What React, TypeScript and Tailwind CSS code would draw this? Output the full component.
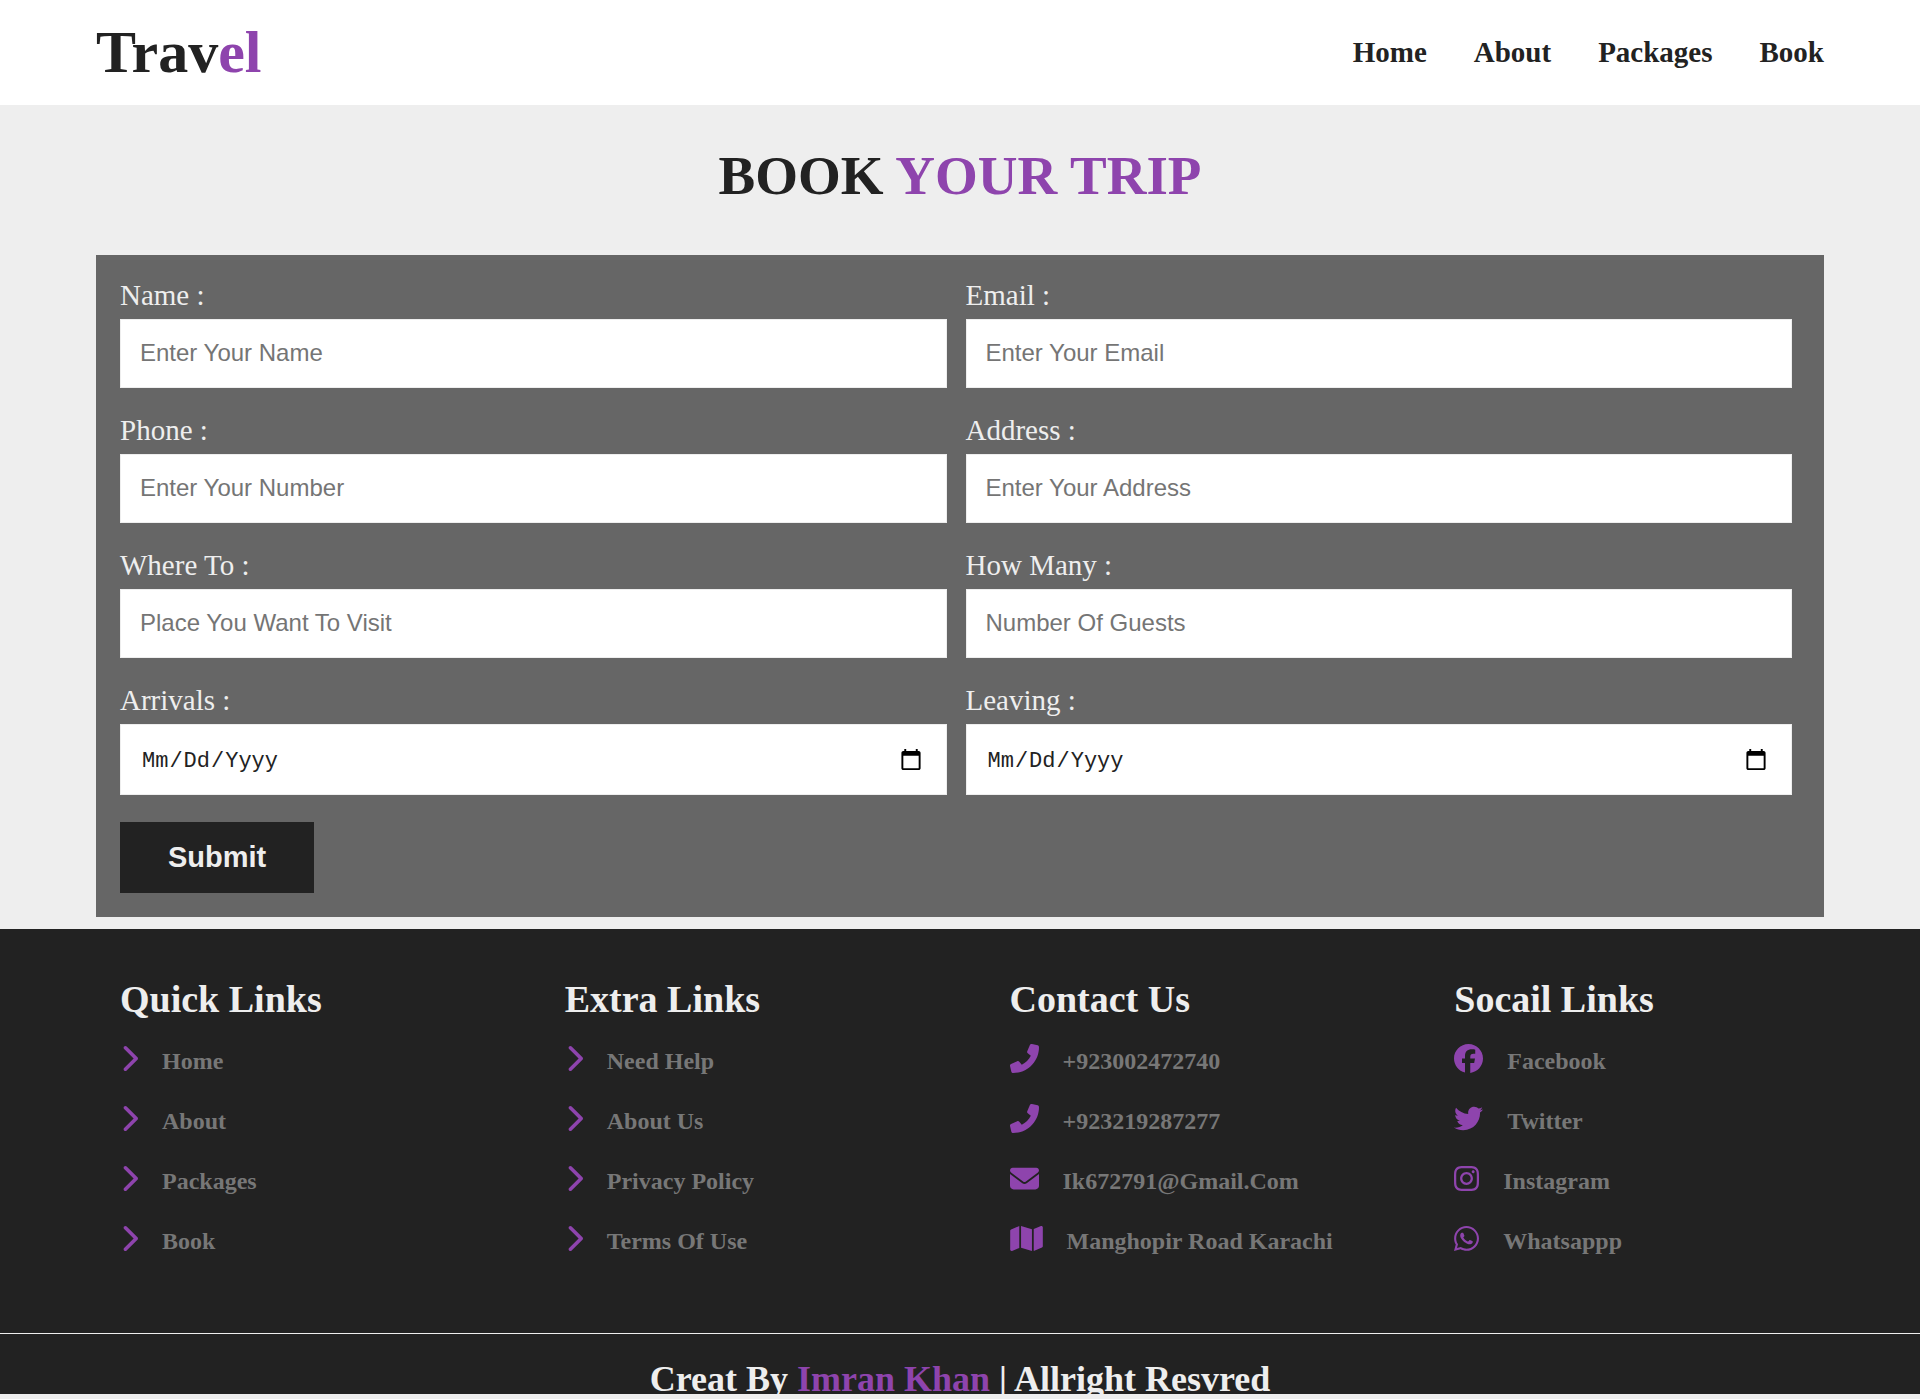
import type { ComponentType, SVGProps } from "react";
import {
  FaChevronRight,
  FaEnvelope,
  FaFacebook,
  FaInstagram,
  FaMap,
  FaTwitter,
  FaWhatsapp,
} from "react-icons/fa6";

type Field = { id: string; label: string; type: string; placeholder?: string };
type FooterLink = {
  text: string;
  icon: ComponentType<SVGProps<SVGSVGElement>>;
  width: string;
};

function PhoneIcon(props: SVGProps<SVGSVGElement>) {
  return (
    <svg viewBox="0 0 512 512" fill="currentColor" {...props}>
      <path d="M18.9 351.2l108.5-46.5c12.8-5.5 27.8-1.8 36.5 9l44.1 53.8c69.3-34 125.5-90.3 159.5-159.5l-53.8-44.1c-10.8-8.8-14.5-23.7-9-36.4l46.5-108.6c6.1-14.3 21.5-22 36.6-18.4l100.8 23.3C502.6 27.2 512 40.7 512 56c0 251.4-204.5 456-456 456-15.3 0-28.8-9.4-32.3-23.5L.4 387.7c-3.4-15 4.3-30.5 18.5-36.5z" />
    </svg>
  );
}

const navLinks = ["Home", "About", "Packages", "Book"];

const fields: Field[] = [
  { id: "name", label: "Name :", type: "text", placeholder: "Enter Your Name" },
  { id: "email", label: "Email :", type: "email", placeholder: "Enter Your Email" },
  { id: "phone", label: "Phone :", type: "tel", placeholder: "Enter Your Number" },
  { id: "address", label: "Address :", type: "text", placeholder: "Enter Your Address" },
  { id: "where", label: "Where To :", type: "text", placeholder: "Place You Want To Visit" },
  { id: "guests", label: "How Many :", type: "number", placeholder: "Number Of Guests" },
  { id: "arrivals", label: "Arrivals :", type: "date" },
  { id: "leaving", label: "Leaving :", type: "date" },
];

const columns: { title: string; links: FooterLink[] }[] = [
  {
    title: "Quick Links",
    links: navLinks.map((text) => ({ text, icon: FaChevronRight, width: "w-[18px]" })),
  },
  {
    title: "Extra Links",
    links: ["Need Help", "About Us", "Privacy Policy", "Terms Of Use"].map((text) => ({
      text,
      icon: FaChevronRight,
      width: "w-[18px]",
    })),
  },
  {
    title: "Contact Us",
    links: [
      { text: "+923002472740", icon: PhoneIcon, width: "w-[29px]" },
      { text: "+923219287277", icon: PhoneIcon, width: "w-[29px]" },
      { text: "Ik672791@Gmail.Com", icon: FaEnvelope, width: "w-[29px]" },
      { text: "Manghopir Road Karachi", icon: FaMap, width: "w-[33px]" },
    ],
  },
  {
    title: "Socail Links",
    links: [
      { text: "Facebook", icon: FaFacebook, width: "w-[29px]" },
      { text: "Twitter", icon: FaTwitter, width: "w-[29px]" },
      { text: "Instagram", icon: FaInstagram, width: "w-[25px]" },
      { text: "Whatsappp", icon: FaWhatsapp, width: "w-[25px]" },
    ],
  },
];

function Header() {
  return (
    <header className="flex items-center justify-between bg-white px-[5%] py-[18px] font-bold">
      <a href="#" className="text-[60px] leading-[69px]">
        Trav<span className="text-[#8e44ad]">el</span>
      </a>
      <nav className="flex gap-[47px] text-[29px] leading-[33px]">
        {navLinks.map((text) => (
          <a key={text} href="#">
            {text}
          </a>
        ))}
      </nav>
    </header>
  );
}

function FormField({ field }: { field: Field }) {
  const isDate = field.type === "date";
  return (
    <div className="flex flex-col gap-[7px]">
      <label htmlFor={field.id} className="text-[29px] leading-[33px] text-[#eee]">
        {field.label}
      </label>
      <input
        id={field.id}
        type={field.type}
        placeholder={field.placeholder}
        className={
          isDate
            ? "h-[71px] w-full border border-[#eee] bg-white px-5 font-['Liberation_Mono',monospace] text-[22px] capitalize text-[#222] [&::-webkit-calendar-picker-indicator]:mr-px [&::-webkit-calendar-picker-indicator]:size-6 [&::-webkit-datetime-edit]:pt-1"
            : "h-[69px] w-full border border-[#eee] bg-white px-[19px] pb-0.5 font-['Liberation_Sans',sans-serif] text-2xl text-[#222] placeholder:text-[#757575]"
        }
      />
    </div>
  );
}

function Booking() {
  return (
    <section className="px-[5%] pt-10 pb-3">
      <h1 className="mb-[49px] text-center text-[55px] leading-[61px] font-bold uppercase">
        Book <span className="text-[#8e44ad]">your trip</span>
      </h1>
      <form className="bg-[#666] py-6 pr-8 pl-6">
        <div className="grid grid-cols-2 gap-x-[19px] gap-y-[26px]">
          {fields.map((field) => (
            <FormField key={field.id} field={field} />
          ))}
        </div>
        <button
          type="submit"
          className="mt-[27px] block h-[71px] bg-[#222] px-12 font-['Liberation_Sans',sans-serif] text-[29px] font-bold text-[#eee]"
        >
          Submit
        </button>
      </form>
    </section>
  );
}

function Footer() {
  return (
    <footer className="bg-[#222] font-bold text-[#eee]">
      <div className="px-[5%] pt-12 pb-[75px]">
        <div className="grid grid-cols-4 gap-x-[99px] px-6">
          {columns.map((column) => (
            <div key={column.title}>
              <h2 className="mb-[23px] text-[38px] leading-[44px]">{column.title}</h2>
              <ul className="flex flex-col gap-[26px]">
                {column.links.map(({ text, icon: Icon, width }) => (
                  <li key={text}>
                    <a href="#" className="flex items-start gap-6 whitespace-nowrap">
                      <Icon className={`h-[29px] shrink-0 text-[#8e44ad] ${width}`} aria-hidden />
                      <span className="text-2xl leading-[34px] text-[#777]">{text}</span>
                    </a>
                  </li>
                ))}
              </ul>
            </div>
          ))}
        </div>
      </div>
      <div className="border-t border-[#eee] pt-[30px]">
        <p className="overflow-hidden text-center text-4xl leading-[30px]">
          Creat By <span className="text-[#8e44ad]">Imran Khan</span> | Allright Resvred
        </p>
      </div>
    </footer>
  );
}

export default function App() {
  return (
    <div className="min-h-screen bg-[#eee] font-['Liberation_Serif',serif] text-[#222]">
      <Header />
      <main>
        <Booking />
      </main>
      <Footer />
    </div>
  );
}
